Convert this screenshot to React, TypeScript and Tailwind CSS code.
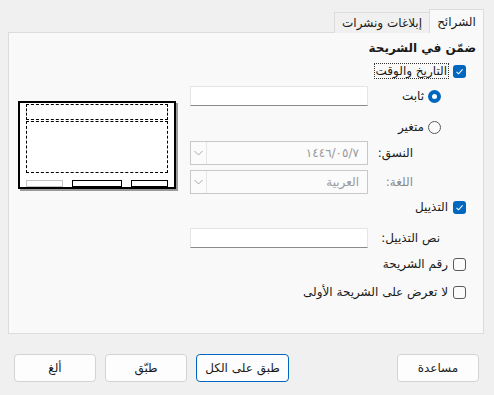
import React from "react";

const font = { fontFamily: '"DejaVu Sans", "Noto Sans", sans-serif' };

function CheckBox({ checked }: { checked?: boolean }) {
	if (checked) {
		return (
			<span className="flex items-center justify-center w-[13px] h-[13px] rounded-[3px] bg-[#0067c0] shrink-0">
				<svg width="9" height="9" viewBox="0 0 9 9">
					<path d="M1.5 4.8 L3.6 6.8 L7.6 2.4" fill="none" stroke="#fff" strokeWidth="1.1" />
				</svg>
			</span>
		);
	}
	return <span className="block w-[13px] h-[13px] rounded-[3px] border border-[#5a5a5a] bg-[#fbfbfb] shrink-0" />;
}

function Radio({ checked }: { checked?: boolean }) {
	if (checked) {
		return (
			<span className="flex items-center justify-center w-[13px] h-[13px] rounded-full bg-[#0067c0] shrink-0">
				<span className="block w-[5px] h-[5px] rounded-full bg-white" />
			</span>
		);
	}
	return <span className="block w-[13px] h-[13px] rounded-full border border-[#5a5a5a] bg-[#fbfbfb] shrink-0" />;
}

function TextBox({ height }: { height: string }) {
	return <div className={`w-[178px] ${height} bg-white border border-[#e5e5e5] border-b-[#8a8a8a]`} />;
}

function ComboBox({ value }: { value: string }) {
	return (
		<div className="flex items-center w-[178px] h-[24px] bg-[#fbfbfb] border border-[#c8c8c8] text-[#9a9a9a]">
			<span className="flex-1 pr-[8px] text-[12px]">{value}</span>
			<span className="flex items-center justify-center w-[16px] h-full border-r border-[#e6e6e6]">
				<svg width="9" height="6" viewBox="0 0 9 6">
					<path d="M0.5 1 L4.5 5 L8.5 1" fill="none" stroke="#a8a8a8" strokeWidth="1" />
				</svg>
			</span>
		</div>
	);
}

function Button({ label, focused, width }: { label: string; focused?: boolean; width: string }) {
	return (
		<button
			className={`${width} h-[28px] rounded-[4px] bg-[#fdfdfd] text-[12px] text-[#1a1a1a] border ${
				focused ? "border-[#0067c0]" : "border-[#d3d3d3]"
			}`}
		>
			{label}
		</button>
	);
}

export default function App() {
	return (
		<div dir="rtl" style={font} className="w-[494px] h-[395px] bg-[#f0f0f0] text-[#1a1a1a] text-[12px] overflow-hidden">
			{/* tabs */}
			<div className="flex items-end h-[32px] pr-[10px]">
				<div className="flex items-center justify-center w-[55px] h-[24px] bg-[#f9f9f9] border border-b-0 border-[#dcdcdc] relative top-[1px] z-10">
					الشرائح
				</div>
				<div className="flex items-center justify-center w-[95px] h-[21px] bg-[#f0f0f0] border border-b-0 border-r-0 border-[#dcdcdc] relative top-[1px]">
					إبلاغات ونشرات
				</div>
			</div>

			{/* panel */}
			<div className="flex mr-[10px] ml-[8px] h-[302px] bg-[#f9f9f9] border border-[#dcdcdc]">
				<div className="flex flex-col w-[286px] mr-[7px]">
					<div className="mt-[6px] h-[18px] flex items-center font-bold">ضمّن في الشريحة</div>

					<div className="mt-[5px] h-[18px] flex items-center pr-[10px] gap-[4px]">
						<CheckBox checked />
						<span className="border border-dotted border-[#333] px-[1px] leading-[14px]">التاريخ والوقت</span>
					</div>

					<div className="mt-[6px] h-[20px] flex items-center justify-between pr-[35px]">
						<div className="flex items-center gap-[4px]">
							<Radio checked />
							<span>ثابت</span>
						</div>
						<TextBox height="h-[20px]" />
					</div>

					<div className="mt-[12px] h-[18px] flex items-center pr-[35px] gap-[4px]">
						<Radio />
						<span>متغير</span>
					</div>

					<div className="mt-[5px] h-[24px] flex items-center justify-between pr-[63px]">
						<span>النسق:</span>
						<ComboBox value="١٤٤٦/٠٥/٧" />
					</div>

					<div className="mt-[5px] h-[24px] flex items-center justify-between pr-[63px]">
						<span className="text-[#8a8a8a]">اللغة:</span>
						<ComboBox value="العربية" />
					</div>

					<div className="mt-[4px] h-[18px] flex items-center pr-[10px] gap-[5px]">
						<CheckBox checked />
						<span>التذييل</span>
					</div>

					<div className="mt-[12px] h-[20px] flex items-center justify-between pr-[36px]">
						<span>نص التذييل:</span>
						<TextBox height="h-[20px]" />
					</div>

					<div className="mt-[7px] h-[18px] flex items-center pr-[10px] gap-[5px]">
						<CheckBox />
						<span>رقم الشريحة</span>
					</div>

					<div className="mt-[10px] h-[18px] flex items-center pr-[10px] gap-[5px]">
						<CheckBox />
						<span>لا تعرض على الشريحة الأولى</span>
					</div>
				</div>

				{/* preview */}
				<div className="mr-[14px] mt-[68px]">
					<div dir="ltr" className="flex flex-col w-[158px] h-[88px] bg-white border-2 border-black shadow-[2px_2px_0_#9a9a9a] px-[6px] pt-[1px]">
						<div className="h-[16px] border border-dashed border-black" />
						<div className="mt-[1px] h-[52px] border border-dashed border-black" />
						<div className="flex mt-[7px] h-[7px] justify-between">
							<div className="w-[37px] border border-[#c4c4c4]" />
							<div className="w-[50px] border border-black" />
							<div className="w-[37px] border border-black" />
						</div>
					</div>
				</div>
			</div>

			{/* buttons */}
			<div className="flex items-center mt-[20px] pr-[15px] pl-[14px]">
				<Button label="مساعدة" width="w-[82px]" />
				<div className="flex-1" />
				<div className="flex gap-[9px]">
					<Button label="طبق على الكل" focused width="w-[93px]" />
					<Button label="طبّق" width="w-[82px]" />
					<Button label="ألغ" width="w-[82px]" />
				</div>
			</div>
		</div>
	);
}
